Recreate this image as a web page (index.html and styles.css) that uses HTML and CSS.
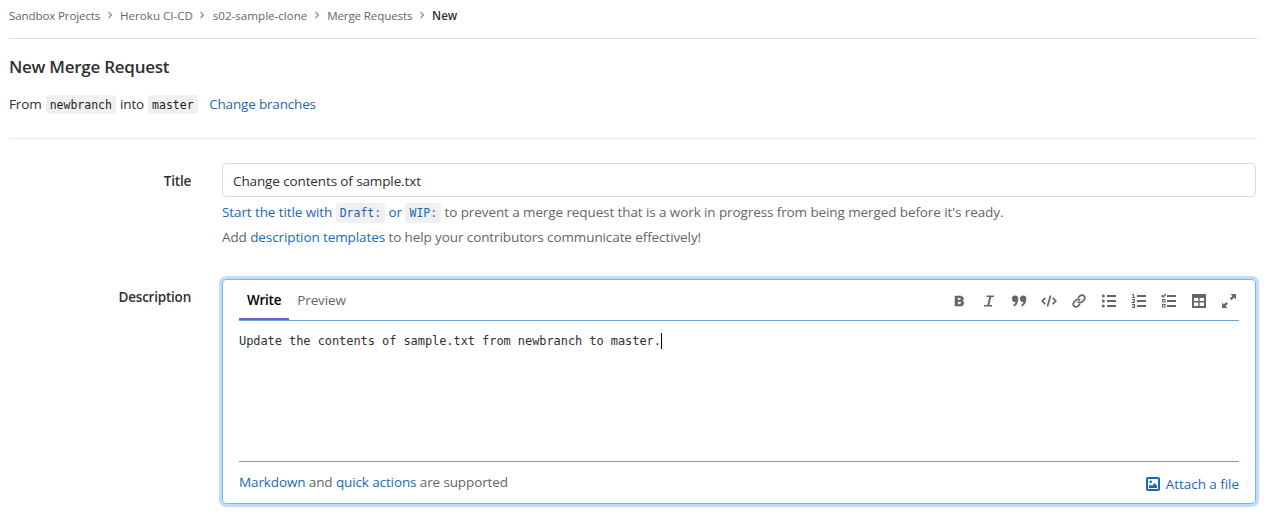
FILE: index.html
```html
<!DOCTYPE html>
<html lang="en">
<head>
<meta charset="utf-8">
<title>New Merge Request</title>
<link rel="stylesheet" href="styles.css">
</head>
<body>
<main class="page">
  <nav class="breadcrumbs">
    <a class="tight">Sandbox Projects</a>
    <svg class="chevron" viewBox="0 0 6 8"><path d="M1.500 1l3 3-3 3"/></svg>
    <a>Heroku CI-CD</a>
    <svg class="chevron" viewBox="0 0 6 8"><path d="M1.500 1l3 3-3 3"/></svg>
    <a>s02-sample-clone</a>
    <svg class="chevron" viewBox="0 0 6 8"><path d="M1.500 1l3 3-3 3"/></svg>
    <a class="tight">Merge Requests</a>
    <svg class="chevron" viewBox="0 0 6 8"><path d="M1.500 1l3 3-3 3"/></svg>
    <a class="current">New</a>
  </nav>
  <h1 class="page-title">New Merge Request</h1>
  <div class="branches"><span>From</span><code>newbranch</code><span>into</span><code>master</code><a class="link change">Change branches</a></div>
  <form class="form">
    <div class="row title-row">
      <label class="label">Title</label>
      <div class="field">
        <div class="input">Change contents of sample.txt</div>
        <p class="help"><a class="link">Start the title with <code>Draft:</code> or <code>WIP:</code></a> to prevent a merge request that is a work in progress from being merged before it's ready.</p>
        <p class="help">Add <a class="link">description templates</a> to help your contributors communicate effectively!</p>
      </div>
    </div>
    <div class="row desc-row">
      <label class="label">Description</label>
      <div class="field editor">
        <div class="editor-head">
          <div class="tabs"><a class="tab active">Write</a><a class="tab">Preview</a></div>
          <div class="toolbar">
            <svg class="bold" viewBox="0 0 16 16"><path fill-rule="evenodd" d="M4 3h5c2.300 0 3.500 1.100 3.500 2.700 0 1-.6 1.800-1.500 2.100 1.200.3 1.900 1.200 1.900 2.400 0 1.900-1.400 2.900-3.800 2.900H4zM6.500 4.800v2.300h1.900c1 0 1.500-.4 1.500-1.200S9.400 4.800 8.400 4.800zM6.500 8.800v2.500h2.200c1 0 1.600-.4 1.600-1.200S9.700 8.800 8.700 8.800z"/></svg>
            <svg viewBox="0 0 16 16"><path d="M5.500 2.500H13v1.600h-2.700l-2 7.800H11v1.600H3v-1.600h3.300l2-7.800H5.500z"/></svg>
            <svg viewBox="0 0 16 16"><path d="M4 2.500a3.200 3.200 0 0 1 3.300 3.300c0 4-1.800 6.600-4.300 7.700L2 12.100c1.500-.8 2.200-1.700 2.500-3A3.200 3.200 0 1 1 4 2.500zM12 2.500a3.200 3.200 0 0 1 3.300 3.300c0 4-1.800 6.600-4.300 7.700L10 12.100c1.500-.8 2.200-1.700 2.500-3A3.200 3.200 0 1 1 12 2.500z"/></svg>
            <svg viewBox="0 0 16 16" class="line"><path d="M4.300 4.800L1.200 8l3.100 3.200M11.700 4.800L14.800 8l-3.100 3.200M9.600 2.500l-3.200 11"/></svg>
            <svg viewBox="0 0 16 16" class="line"><path d="M7 4.900l2-2a2.800 2.800 0 0 1 4 0 2.800 2.800 0 0 1 0 4L11 8.900a2.800 2.800 0 0 1-4.300-.4M9 11.100l-2 2a2.800 2.800 0 0 1-4 0 2.800 2.800 0 0 1 0-4l2-2a2.800 2.800 0 0 1 4.300.4"/></svg>
            <svg viewBox="0 0 16 16"><circle cx="2.300" cy="3" r="1.500"/><circle cx="2.300" cy="8" r="1.500"/><circle cx="2.300" cy="13" r="1.500"/><path d="M6 2h9v2H6zM6 7h9v2H6zM6 12h9v2H6z"/></svg>
            <svg viewBox="0 0 16 16"><path d="M6 2h9v2H6zM6 7h9v2H6zM6 12h9v2H6z"/><path class="thin" d="M1 1.500h1.500V4.500M.8 4.500h3.400M1 6.500h2.500v1.300L1.400 9.500H4M1 11.500h2.500v3H1M1.600 13h2"/></svg>
            <svg viewBox="0 0 16 16"><path d="M6 2h9v2H6zM6 7h9v2H6zM6 12h9v2H6z"/><path class="check" d="M.6 2.400l1.500 1.400L5 1"/><path class="thin" d="M1.500 6.500h2.500v2.500H1.500zM1.500 11.500h2.500v2.500H1.500z"/></svg>
            <svg viewBox="0 0 16 16"><path fill-rule="evenodd" d="M1 1h14v14H1zM3 5v3h4.300V5zM8.700 5v3H13V5zM3 9.400V13h4.300V9.400zM8.700 9.400V13H13V9.400z"/></svg>
            <svg viewBox="0 0 16 16"><path d="M9.500 1H15v5.500l-1.900-1.900-2.600 2.600-1.700-1.700 2.600-2.600zM1 9.500l1.900 1.900 2.300-2.300 1.700 1.700-2.300 2.300L6.500 15H1z"/></svg>
          </div>
        </div>
        <div class="textarea">Update the contents of sample.txt from newbranch to master.<i class="caret"></i></div>
        <div class="editor-foot">
          <p><a class="link">Markdown</a> and <a class="link">quick actions</a> are supported</p>
          <a class="link attach"><svg viewBox="0 0 16 16"><path fill-rule="evenodd" d="M3 1h10a2 2 0 0 1 2 2v10a2 2 0 0 1-2 2H3a2 2 0 0 1-2-2V3a2 2 0 0 1 2-2zm0 2v10h10V3z"/><circle cx="5.700" cy="5.800" r="1.300"/><path d="M4 12V9.800L5.500 8.500l1.500 1.500L9.500 7 12 9.800V12z"/></svg><span>Attach a file</span></a>
        </div>
      </div>
    </div>
  </form>
</main>
</body>
</html>
```
FILE: styles.css
```css
* { box-sizing: border-box; }
body { margin: 0; background: #fff; color: #303030; font: 13.5px/20px "Open Sans", "Noto Sans", sans-serif; letter-spacing: -0.12px; }
.page { min-height: 522px; padding: 0 15px 18px 9px; }
p, h1 { margin: 0; }
code { font: 11.5px/15px "DejaVu Sans Mono", monospace; letter-spacing: 0; background: #f0f0f0; color: #1f1f1f; border-radius: 4px; padding: 3px 4px 1px; }
.link { color: #1b69b6; }
.link code { color: #1b69b6; padding: 3px 4px; }
.breadcrumbs { display: flex; align-items: center; height: 39px; padding-bottom: 7px; border-bottom: 1px solid #dbdbdb; font-size: 11.6px; letter-spacing: 0; color: #666; }
.breadcrumbs .tight { letter-spacing: -0.14px; }
.breadcrumbs .current { color: #303030; font-weight: 600; }
.chevron { width: 6px; height: 8px; margin: 0 7.500px 1px 6.300px; fill: none; stroke: #888; stroke-width: 1.1; }
.page-title { font-size: 17px; line-height: 24px; font-weight: 600; letter-spacing: -0.26px; padding-top: 16px; }
.branches { display: flex; align-items: center; gap: 4px; height: 60px; padding-bottom: 9px; border-bottom: 1px solid #eee; }
.change { margin-left: 7.500px; letter-spacing: -0.17px; }
.form { padding-right: 1px; }
.row { display: flex; }
.title-row { padding-top: 24px; }
.label { width: 182px; margin-right: 31px; text-align: right; font-weight: 600; letter-spacing: -0.22px; padding-top: 8px; }
.field { flex: 1; }
.input { height: 34px; border: 1px solid #dbdbdb; border-radius: 4px; padding: 7px 10px; }
.help { color: #666; line-height: 25px; letter-spacing: -0.1px; }
.help:nth-child(2) { margin-top: 3px; }
.desc-row { padding-top: 29px; }
.editor { height: 225px; border: 1px solid #80b3e6; border-radius: 4px; box-shadow: 0 0 0 3px #c0ddfb; padding: 0 16px; display: flex; flex-direction: column; }
.editor-head { height: 41px; display: flex; justify-content: space-between; border-bottom: 1px solid #6fa3cf; }
.tabs { display: flex; }
.tab { height: 40px; padding: 10px 8px 0; color: #666; }
.tab.active { color: #000; font-weight: 600; letter-spacing: -0.25px; border-bottom: 2px solid #6666c4; }
.toolbar { display: flex; gap: 14px; align-items: center; padding: 2px 2px 0 0; }
svg { width: 16px; height: 16px; fill: #666; flex: none; }
.bold { stroke: #666; stroke-width: 0.5; }
.line { fill: none; stroke: #666; stroke-width: 1.7; }
.thin { fill: none; stroke: #666; stroke-width: 1.1; }
.check { fill: none; stroke: #666; stroke-width: 1.6; }
.textarea { height: 141px; border-bottom: 1px solid #6fa3cf; padding-top: 10px; font: 12px/20px "DejaVu Sans Mono", monospace; letter-spacing: -0.075px; display: flex; }
.caret { width: 1px; height: 16px; margin-top: 2px; background: #000; }
.editor-foot { display: flex; justify-content: space-between; padding-top: 10px; color: #666; }
.attach { display: flex; gap: 5px; align-items: center; margin-top: 1px; height: 22px; letter-spacing: -0.05px; }
.attach svg { fill: #1b69b6; }
```
